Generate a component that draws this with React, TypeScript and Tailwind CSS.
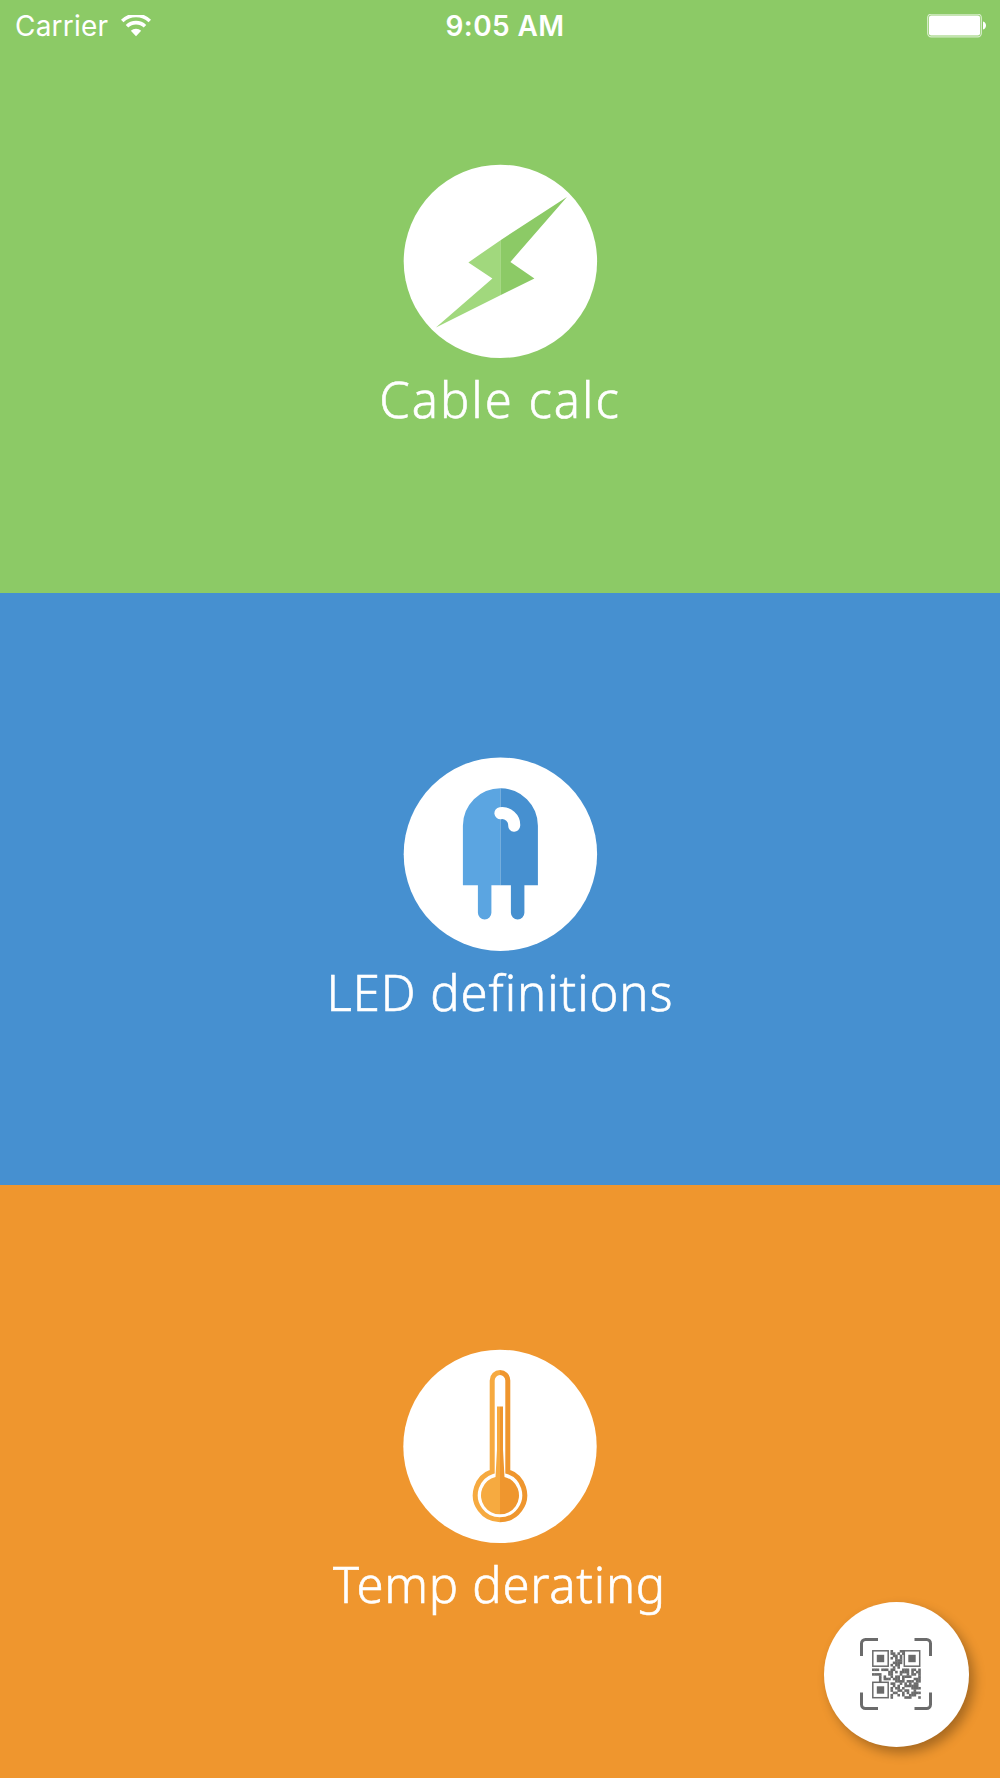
import type { ReactNode } from "react";

const qrModules = [
  "........#...##.......",
  "........##.#.#.......",
  ".........##.#........",
  "........#.#.#........",
  "..........###........",
  ".........####........",
  "........#.##.........",
  ".........#.#.........",
  "###.###.##...###.##.#",
  ".......##.#.####.#.##",
  "####...##...#..#.##.#",
  "...#.#..#.##.####...#",
  "...#.###.###.#....###",
  "...#......####.###.##",
  "........##..#.#.#.##.",
  ".........#.#..######.",
  "........#.##.#...####",
  "........#..##.##..#..",
  ".........##..#.#.####",
  "........#..#.#..###..",
  "........#.....###...#",
];

const finders = [
  [0, 0],
  [31.5, 0],
  [0, 31.5],
];

function WifiIcon() {
  return (
    <svg className="h-[22px] w-[30px]" viewBox="0 0.7 30 22" fill="none" stroke="white">
      <path d="M1.2 6.7a19.8 19.8 0 0 1 27.6 0" strokeWidth="3.6" />
      <path d="M6 11.9a13 13 0 0 1 18 0" strokeWidth="3.6" />
      <path d="M15 22l-5.2-5.500a7.400 7.400 0 0 1 10.400 0z" fill="white" stroke="none" />
    </svg>
  );
}

function BatteryIcon() {
  return (
    <svg className="h-6 w-[60px]" viewBox="0 0.8 60 24">
      <rect x="0.7" y="1" width="53.6" height="22.6" rx="3.5" fill="none" stroke="white" strokeOpacity="0.65" strokeWidth="1.3" />
      <rect x="2" y="2.3" width="51" height="20" rx="2" fill="white" />
      <path d="M56 8.300c4 .8 4 7.200 0 8z" fill="white" />
    </svg>
  );
}

function BoltIcon() {
  return (
    <svg className="size-[194px] overflow-visible" viewBox="-0.4 -0.4 194 194">
      <circle cx="97" cy="97" r="96.700" fill="white" />
      <path d="M97.500 75.500L65 98 89 114 32.500 163 97.500 130.500z" fill="#a1d87d" />
      <path d="M97.500 75.500L163.500 32.500 107 97.500 131 114 97.500 130.500z" fill="#8cca66" />
    </svg>
  );
}

function LedIcon() {
  return (
    <svg className="size-[194px] overflow-visible" viewBox="-0.4 -0.2 194 194">
      <circle cx="97" cy="97" r="96.700" fill="white" />
      <path d="M97 31A37.500 37.500 0 0 0 59.500 68.500V128H74.500V155.500a6.750 6.750 0 0 0 13.500 0V128H97z" fill="#5ba5e1" />
      <path d="M97 31A37.500 37.500 0 0 1 134.500 68.500V128H121V155.500a6.750 6.750 0 0 1 -13.500 0V128H97z" fill="#4690d0" />
      <path d="M97 56C104.500 55 111.300 61 110.800 68.500" fill="none" stroke="white" strokeWidth="12" strokeLinecap="round" />
    </svg>
  );
}

function ThermometerIcon() {
  return (
    <svg className="size-[194px] overflow-visible" viewBox="0 -0.4 194 194">
      <defs>
        <linearGradient id="thermo" gradientUnits="userSpaceOnUse" x1="0" y1="0" x2="194" y2="0">
          <stop offset="0.5" stopColor="#f6aa40" />
          <stop offset="0.5" stopColor="#ef962e" />
        </linearGradient>
      </defs>
      <circle cx="97" cy="97" r="96.700" fill="white" />
      <path
        d="M89.200 122.200V31a7.800 7.800 0 0 1 15.600 0V122.200A24.700 24.700 0 1 1 89.200 122.200z"
        fill="none"
        stroke="url(#thermo)"
        strokeWidth="5"
      />
      <path d="M94 57H100V100L101.500 127.500A19 19 0 1 1 92.500 127.500L94 100z" fill="url(#thermo)" />
    </svg>
  );
}

function QrIcon() {
  return (
    <svg className="mr-[2px] mb-[2px] size-[72px]" viewBox="0 0 72 72" fill="none" stroke="#6b6b6b">
      <path d="M1.500 18V5.500a4 4 0 0 1 4-4H18M54.500 1.500H66.500a4 4 0 0 1 4 4V18M70.500 54.500V66.500a4 4 0 0 1 -4 4H54.500M18 70.500H5.500a4 4 0 0 1 -4-4V54.500" strokeWidth="3" />
      <g transform="translate(12 12)">
        {finders.map(([x, y]) => (
          <g key={`${x}-${y}`}>
            <rect x={x + 0.8} y={y + 0.8} width="15.4" height="15.4" strokeWidth="1.5" />
            <rect x={x + 4.8} y={y + 4.8} width="7.4" height="7.4" fill="#6b6b6b" stroke="none" />
          </g>
        ))}
        {qrModules.map((row, r) =>
          row.split("").map((cell, c) =>
            cell === "#" ? (
              <rect key={`${r}-${c}`} x={c * 2.31} y={r * 2.31} width="2.6" height="2.6" fill="#6b6b6b" stroke="none" />
            ) : null
          )
        )}
      </g>
    </svg>
  );
}

function Panel({
  className,
  labelClass,
  label,
  icon,
}: {
  className: string;
  labelClass: string;
  label: string;
  icon: ReactNode;
}) {
  return (
    <section className={`flex flex-1 flex-col items-center pt-[164px] ${className}`}>
      {icon}
      <h2
        className={`mt-[9px] whitespace-nowrap font-['Noto_Sans',sans-serif] text-[49px] leading-[64px] font-light [-webkit-text-stroke:0.6px_white] ${labelClass}`}
      >
        {label}
      </h2>
    </section>
  );
}

export default function App() {
  return (
    <main className="relative flex h-[1778px] w-[1000px] flex-col overflow-hidden text-white">
      <header className="absolute inset-x-0 top-0 grid h-[51px] grid-cols-3 items-center pr-[13px] pl-[15px] font-[Inter,sans-serif] text-[28px]">
        <div className="flex items-center gap-[13px]">
          <span className="tracking-[0.2px]">Carrier</span>
          <WifiIcon />
        </div>
        <span className="pl-[8px] text-center font-semibold tracking-[0.4px] whitespace-nowrap">9:05 AM</span>
        <div className="flex justify-end">
          <BatteryIcon />
        </div>
      </header>

      <Panel
        className="bg-[#8cca66]"
        labelClass="tracking-[2px]"
        label="Cable calc"
        icon={<BoltIcon />}
      />
      <Panel
        className="bg-[#4690d0]"
        labelClass="tracking-[0.95px]"
        label="LED definitions"
        icon={<LedIcon />}
      />
      <Panel
        className="bg-[#ef962e] pr-px"
        labelClass="tracking-[0.75px]"
        label="Temp derating"
        icon={<ThermometerIcon />}
      />

      <button
        aria-label="Scan QR code"
        className="absolute right-[31px] bottom-[31px] flex size-[145px] items-center justify-center rounded-full bg-white shadow-[5px_6px_12px_rgba(0,0,0,0.3)]"
      >
        <QrIcon />
      </button>
    </main>
  );
}
